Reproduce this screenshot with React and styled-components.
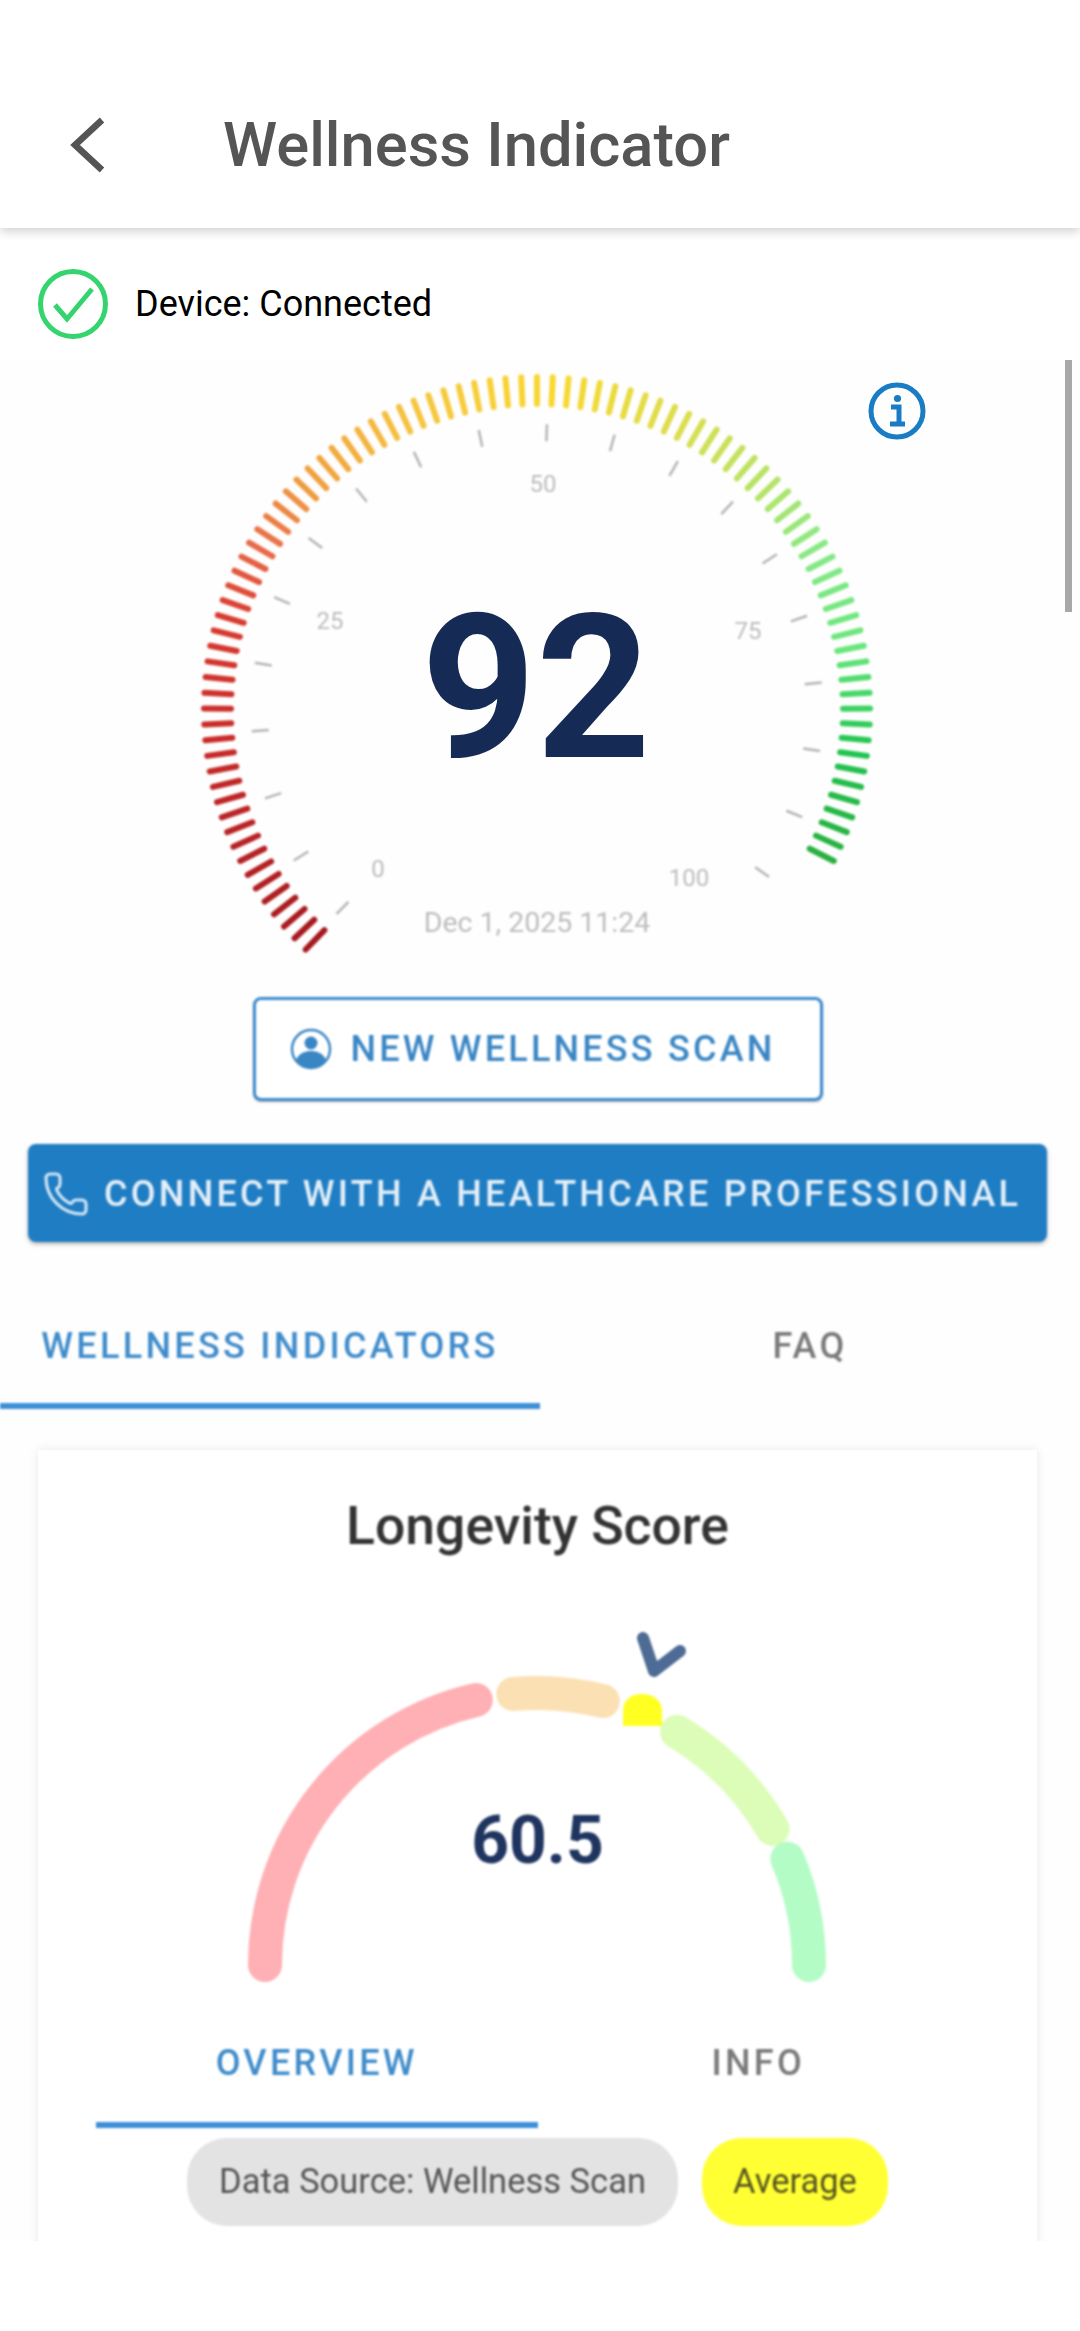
import styled, { createGlobalStyle } from "styled-components";
import { Phone } from "lucide-react";

const GlobalStyle = createGlobalStyle`
  html, body {
    margin: 0;
    background: #fff;
    font-family: Roboto, "Liberation Sans", sans-serif;
  }
  * { box-sizing: border-box; }
`;

const Page = styled.div`
  width: 1080px;
  height: 2331px;
  overflow: hidden;
  background: #fff;
`;

const Header = styled.header`
  position: relative;
  z-index: 2;
  height: 228px;
  padding: 62px 0 0 68px;
  display: flex;
  align-items: center;
  background: #fff;
  box-shadow: 0 3px 10px rgba(0, 0, 0, 0.2);
`;

const Title = styled.h1`
  margin: 0 0 0 117px;
  font-size: 61.5px;
  font-weight: 500;
  color: #555;
  white-space: nowrap;
`;

const DeviceRow = styled.div`
  height: 132px;
  padding: 20px 0 0 38px;
  display: flex;
  align-items: center;
  gap: 27px;
  font-size: 36px;
  color: #000;
`;

const Scroller = styled.main`
  position: relative;
  height: 1881px;
  overflow: hidden;
  background: #fefefe;
`;

const ScrollThumb = styled.div`
  position: absolute;
  top: 0;
  right: 8px;
  width: 7px;
  height: 252px;
  background: #a8a8a8;
`;

const GaugeWrap = styled.section`
  position: relative;
  height: 637px;
`;

const GaugeSvg = styled.svg`
  display: block;
  filter: blur(1px);
`;

const InfoIcon = styled.svg`
  position: absolute;
  top: 22px;
  left: 868px;
  filter: blur(0.3px);
`;

const GaugeValue = styled.div`
  position: absolute;
  top: 229px;
  left: 0;
  width: 1072px;
  text-align: center;
  font-size: 200px;
  line-height: 1;
  font-weight: 700;
  color: #152a54;
`;

const GaugeDate = styled.div`
  position: absolute;
  top: 546px;
  left: 0;
  width: 1074px;
  text-align: center;
  font-size: 28.5px;
  color: #bdbdbd;
  filter: blur(1px);
`;

const Actions = styled.div`
  display: flex;
  flex-direction: column;
  align-items: center;
  gap: 43px;
  padding: 0 33px 0 28px;
  filter: blur(0.9px);
`;

const OutlineButton = styled.button`
  width: 570px;
  height: 104px;
  display: flex;
  align-items: center;
  justify-content: center;
  gap: 19px;
  padding: 0 10px 0 0;
  border: 3px solid #3c8bd0;
  border-radius: 8px;
  background: #fff;
  color: #3a86c4;
  font: 500 36px Roboto, sans-serif;
  letter-spacing: 3.2px;
  white-space: nowrap;
  box-shadow: 0 1px 2px rgba(0, 0, 0, 0.35);
`;

const FilledButton = styled.button`
  width: 100%;
  height: 98px;
  display: flex;
  align-items: center;
  gap: 14px;
  padding: 2px 0 0 14px;
  border: none;
  border-radius: 8px;
  background: #1f7dc3;
  color: #e4eff8;
  font: 500 36px Roboto, sans-serif;
  letter-spacing: 3.26px;
  white-space: nowrap;
  box-shadow: 0 2px 4px rgba(0, 0, 0, 0.3);
`;

const Tabs = styled.nav`
  display: flex;
  filter: blur(0.9px);
`;

const Tab = styled.div`
  flex: 1;
  height: ${(p) => p.$height}px;
  display: flex;
  align-items: center;
  justify-content: center;
  padding-top: ${(p) => p.$pad}px;
  font-size: 36px;
  font-weight: 500;
  letter-spacing: 3.3px;
  white-space: nowrap;
  color: ${(p) => (p.$active ? "#3f8ccb" : "#7a7a7a")};
  border-bottom: 6px solid ${(p) => (p.$active ? "#3d8fd8" : "transparent")};
`;

const Card = styled.section`
  margin: 41px 43px 0 38px;
  height: 900px;
  padding: 51px 58px 0;
  background: #fff;
  box-shadow: 0 0 10px rgba(0, 0, 0, 0.09);
`;

const CardTitle = styled.h2`
  margin: 0;
  text-align: center;
  font-size: 53.5px;
  line-height: 50px;
  font-weight: 500;
  color: #333;
  filter: blur(0.9px);
`;

const ScoreWrap = styled.div`
  position: relative;
  margin-top: 50px;
  height: 403px;
`;

const ScoreSvg = styled.svg`
  display: block;
  filter: blur(1px);
`;

const ScoreValue = styled.div`
  position: absolute;
  left: 0;
  right: 0;
  top: 207px;
  text-align: center;
  font-size: 66px;
  line-height: 1;
  font-weight: 700;
  color: #1f3560;
  filter: blur(1px);
`;

const Chips = styled.div`
  display: flex;
  justify-content: center;
  gap: 24px;
  margin: 10px 0 0 0;
  filter: blur(0.9px);
`;

const Chip = styled.span`
  height: 88px;
  display: flex;
  align-items: center;
  padding: 0 ${(p) => p.$pad}px 3px;
  border-radius: 40px;
  font-size: 34.5px;
  white-space: nowrap;
  background: ${(p) => (p.$tone === "yellow" ? "#ffff33" : "#e3e3e3")};
  color: ${(p) => (p.$tone === "yellow" ? "#55551f" : "#555")};
`;

const CX = 537;
const CY = 710;

const polar = (angle, r, cx = CX, cy = CY) => {
  const a = (angle * Math.PI) / 180;
  return [cx + r * Math.sin(a), cy - r * Math.cos(a)];
};

const COLOR_STOPS = [
  [0, [165, 25, 31]],
  [0.15, [198, 42, 42]],
  [0.25, [217, 61, 48]],
  [0.3, [232, 105, 74]],
  [0.36, [240, 160, 64]],
  [0.45, [246, 198, 64]],
  [0.55, [249, 216, 48]],
  [0.65, [216, 222, 80]],
  [0.72, [180, 228, 104]],
  [0.78, [134, 232, 136]],
  [0.85, [106, 230, 124]],
  [0.92, [34, 196, 82]],
  [1, [42, 176, 64]],
];

const tickColor = (t) => {
  let i = 0;
  while (i < COLOR_STOPS.length - 2 && t > COLOR_STOPS[i + 1][0]) i++;
  const [t0, c0] = COLOR_STOPS[i];
  const [t1, c1] = COLOR_STOPS[i + 1];
  const k = (t - t0) / (t1 - t0);
  const c = c0.map((v, n) => Math.round(v + (c1[n] - v) * k));
  return `rgb(${c.join(",")})`;
};

const BAR_COUNT = 94;
const bars = Array.from({ length: BAR_COUNT }, (_, i) => {
  const angle = -136 + i * 2.72;
  const [x1, y1] = polar(angle, 306);
  const [x2, y2] = polar(angle, 333);
  return { x1, y1, x2, y2, color: tickColor(i / (BAR_COUNT - 1)) };
});

const scale = Array.from({ length: 20 }, (_, i) => {
  const angle = -135.5 + i * 13.75;
  const [x1, y1] = polar(angle, 269);
  const [x2, y2] = polar(angle, 286);
  return { x1, y1, x2, y2 };
});

const scaleLabels = [
  { text: "0", x: 378, y: 877 },
  { text: "25", x: 330, y: 629 },
  { text: "50", x: 543, y: 492 },
  { text: "75", x: 748, y: 639 },
  { text: "100", x: 689, y: 886 },
];

// score arc, coordinates local to the card gauge
const SX = 441;
const SY = 364;
const SR = 272;

const arcPath = (from, to) => {
  const [x1, y1] = polar(from, SR, SX, SY);
  const [x2, y2] = polar(to, SR, SX, SY);
  return `M${x1} ${y1}A${SR} ${SR} 0 0 1 ${x2} ${y2}`;
};

const segments = [
  { from: -90, to: -13, color: "#ffb0b4" },
  { from: -5, to: 14, color: "#fbe0b4" },
  { from: 31, to: 60, color: "#dcfdb8" },
  { from: 67, to: 90, color: "#b4fcc6" },
];

function Gauge() {
  return (
    <GaugeWrap>
      <GaugeSvg width="1080" height="637" viewBox="0 360 1080 637">
        {bars.map((b, i) => (
          <line key={i} x1={b.x1} y1={b.y1} x2={b.x2} y2={b.y2} stroke={b.color} strokeWidth="6" strokeLinecap="round" />
        ))}
        {scale.map((s, i) => (
          <line key={i} x1={s.x1} y1={s.y1} x2={s.x2} y2={s.y2} stroke="#b4b4b4" strokeWidth="2.5" />
        ))}
        {scaleLabels.map((l) => (
          <text key={l.text} x={l.x} y={l.y} textAnchor="middle" fontSize="24" fill="#bcbcbc" fontFamily="Roboto">
            {l.text}
          </text>
        ))}
      </GaugeSvg>
      <InfoIcon width="58" height="58" viewBox="0 0 58 58" fill="none">
        <circle cx="29" cy="29" r="26" stroke="#1a7cc4" strokeWidth="5" />
        <circle cx="29.5" cy="16.5" r="3.6" fill="#1a7cc4" />
        <path d="M23 25h8v17M22 42h15" stroke="#1a7cc4" strokeWidth="5" />
      </InfoIcon>
      <GaugeValue>92</GaugeValue>
      <GaugeDate>Dec 1, 2025 11:24</GaugeDate>
    </GaugeWrap>
  );
}

export default function App() {
  return (
    <Page>
      <GlobalStyle />
      <Header>
        <svg width="38" height="56" viewBox="0 0 38 56" fill="none">
          <path d="M34 3L7 28l27 25" stroke="#555" strokeWidth="6.5" />
        </svg>
        <Title>Wellness Indicator</Title>
      </Header>
      <DeviceRow>
        <svg width="70" height="70" viewBox="0 0 70 70" fill="none">
          <circle cx="35" cy="35" r="32.5" stroke="#34d46e" strokeWidth="5" />
          <path d="M17 36l12 14 25-30" stroke="#34d46e" strokeWidth="5" />
        </svg>
        <span>Device: Connected</span>
      </DeviceRow>
      <Scroller>
        <ScrollThumb />
        <Gauge />
        <Actions>
          <OutlineButton>
            <svg width="42" height="42" viewBox="0 0 42 42" fill="none">
              <circle cx="21" cy="21" r="19" stroke="#3a86c4" strokeWidth="2.5" />
              <circle cx="21" cy="15" r="6.5" fill="#3a86c4" />
              <path d="M6 32c3-7 9-9 15-9s12 2 15 9c-3 5-9 8-15 8s-12-3-15-8z" fill="#3a86c4" />
            </svg>
            NEW WELLNESS SCAN
          </OutlineButton>
          <FilledButton>
            <Phone size={48} strokeWidth={1.6} color="#cfe4f4" />
            CONNECT WITH A HEALTHCARE PROFESSIONAL
          </FilledButton>
        </Actions>
        <Tabs>
          <Tab $active $height={167} $pad={46}>WELLNESS INDICATORS</Tab>
          <Tab $height={167} $pad={46}>FAQ</Tab>
        </Tabs>
        <Card>
          <CardTitle>Longevity Score</CardTitle>
          <ScoreWrap>
            <ScoreSvg width="883" height="403" viewBox="0 0 883 403" fill="none">
              {segments.map((s) => (
                <path key={s.color} d={arcPath(s.from, s.to)} stroke={s.color} strokeWidth="34" strokeLinecap="round" />
              ))}
              <path d="M527 110c0-11 8-17 19-17s20 6 20 17v15h-39z" fill="#ffff22" />
              <path d="M547 37l11 33 26-20" stroke="#4d6b94" strokeWidth="12" strokeLinecap="round" strokeLinejoin="round" />
            </ScoreSvg>
            <ScoreValue>60.5</ScoreValue>
          </ScoreWrap>
          <Tabs>
            <Tab $active $height={124} $pad={0}>OVERVIEW</Tab>
            <Tab $height={124} $pad={0}>INFO</Tab>
          </Tabs>
          <Chips>
            <Chip $pad={32}>Data Source: Wellness Scan</Chip>
            <Chip $tone="yellow" $pad={31}>Average</Chip>
          </Chips>
        </Card>
      </Scroller>
    </Page>
  );
}
